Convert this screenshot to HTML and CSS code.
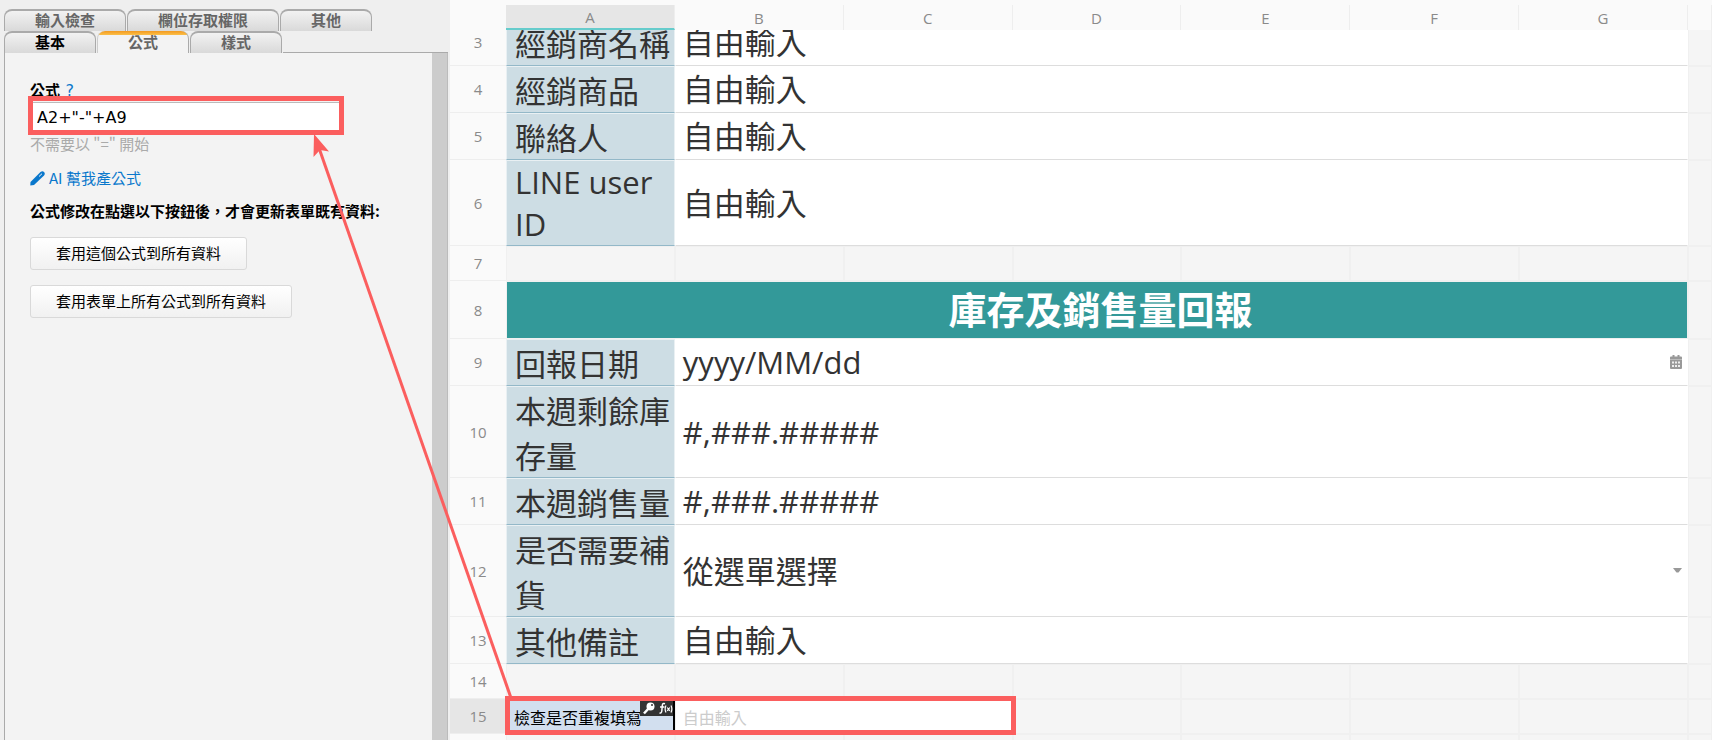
FILE: index.html
```html
<!DOCTYPE html>
<html lang="zh-Hant">
<head>
    <meta charset="UTF-8">
    <meta name="viewport" content="width=device-width, initial-scale=1.0">
    <title>公式設定</title>
    <link rel="stylesheet" href="styles.css">
</head>
<body>
    <div class="app">
        <aside class="settings">
            <nav class="tabs">
                <div class="tab-row">
                    <button type="button" class="tab">輸入檢查</button>
                    <button type="button" class="tab">欄位存取權限</button>
                    <button type="button" class="tab">其他</button>
                </div>
                <div class="tab-row">
                    <button type="button" class="tab tab-dark">基本</button>
                    <button type="button" class="tab tab-active">公式</button>
                    <button type="button" class="tab">樣式</button>
                    <span class="tab-rest"></span>
                </div>
            </nav>
            <div class="panel">
                <div class="panel-body">
                    <div class="field-title">
                        <label for="formula">公式</label>
                        <a href="#" class="help">?</a>
                    </div>
                    <input type="text" id="formula" class="formula-input" value='A2+"-"+A9'>
                    <p class="hint">不需要以 "=" 開始</p>
                    <a href="#" class="ai-link">
                        <svg width="15" height="15" viewBox="0 0 15 15">
                            <path d="M0.300 14.500 L0.500 11 L10.500 1 Q12.500 -0.500 14 1 Q15.500 2.500 14 4.500 L4 14 Z" fill="#0a78cc"/>
                            <path d="M9 5.500 L12 2.700" stroke="#f3f3f3" stroke-width="1"/>
                        </svg>
                        AI 幫我產公式
                    </a>
                    <p class="notice">公式修改在點選以下按鈕後，才會更新表單既有資料:</p>
                    <button type="button" class="apply">套用這個公式到所有資料</button>
                    <button type="button" class="apply">套用表單上所有公式到所有資料</button>
                </div>
                <div class="scrollbar"></div>
            </div>
        </aside>

        <main class="sheet">
            <table class="grid grid-head">
                <colgroup><col class="col-num"><col span="7"><col class="col-end"></colgroup>
                <tr>
                    <th></th>
                    <th class="selected">A</th>
                    <th>B</th>
                    <th>C</th>
                    <th>D</th>
                    <th>E</th>
                    <th>F</th>
                    <th>G</th>
                    <th></th>
                </tr>
            </table>
            <div class="sheet-body">
                <table class="grid">
                    <colgroup><col class="col-num"><col span="7"><col class="col-end"></colgroup>
                    <tr>
                        <th scope="row">3</th>
                        <td class="name">經銷商名稱</td>
                        <td class="value" colspan="6">自由輸入</td>
                        <td></td>
                    </tr>
                    <tr>
                        <th scope="row">4</th>
                        <td class="name">經銷商品</td>
                        <td class="value" colspan="6">自由輸入</td>
                        <td></td>
                    </tr>
                    <tr>
                        <th scope="row">5</th>
                        <td class="name">聯絡人</td>
                        <td class="value" colspan="6">自由輸入</td>
                        <td></td>
                    </tr>
                    <tr>
                        <th scope="row">6</th>
                        <td class="name">LINE user ID</td>
                        <td class="value" colspan="6">自由輸入</td>
                        <td></td>
                    </tr>
                    <tr class="empty">
                        <th scope="row">7</th>
                        <td></td><td></td><td></td><td></td><td></td><td></td><td></td><td></td>
                    </tr>
                    <tr>
                        <th scope="row">8</th>
                        <td class="banner" colspan="7">庫存及銷售量回報</td>
                        <td></td>
                    </tr>
                    <tr>
                        <th scope="row">9</th>
                        <td class="name">回報日期</td>
                        <td class="value" colspan="6">
                            <div class="with-icon">
                                yyyy/MM/dd
                                <svg width="12" height="14" viewBox="0 0 12 14">
                                    <path d="M2.500 0h2v1.500h3V0h2v1.500H11a1 1 0 0 1 1 1V13a1 1 0 0 1-1 1H1a1 1 0 0 1-1-1V2.500a1 1 0 0 1 1-1h1.500z" fill="#999"/>
                                    <path d="M0 4.500h12" stroke="#bbb"/>
                                    <path d="M2 6.500h2v2H2zM5 6.500h2v2H5zM8 6.500h2v2H8zM2 10h2v2H2zM5 10h2v2H5zM8 10h2v2H8z" fill="#eee"/>
                                </svg>
                            </div>
                        </td>
                        <td></td>
                    </tr>
                    <tr>
                        <th scope="row">10</th>
                        <td class="name">本週剩餘庫存量</td>
                        <td class="value" colspan="6">#,###.#####</td>
                        <td></td>
                    </tr>
                    <tr>
                        <th scope="row">11</th>
                        <td class="name">本週銷售量</td>
                        <td class="value" colspan="6">#,###.#####</td>
                        <td></td>
                    </tr>
                    <tr>
                        <th scope="row">12</th>
                        <td class="name">是否需要補貨</td>
                        <td class="value" colspan="6">
                            <div class="with-icon">
                                從選單選擇
                                <svg width="9" height="5" viewBox="0 0 9 5"><path d="M0 0h9L5.500 4.500h-2z" fill="#999"/></svg>
                            </div>
                        </td>
                        <td></td>
                    </tr>
                    <tr>
                        <th scope="row">13</th>
                        <td class="name">其他備註</td>
                        <td class="value" colspan="6">自由輸入</td>
                        <td></td>
                    </tr>
                    <tr class="empty">
                        <th scope="row">14</th>
                        <td></td><td></td><td></td><td></td><td></td><td></td><td></td><td></td>
                    </tr>
                    <tr class="empty">
                        <th scope="row" class="selected">15</th>
                        <td class="key-name">
                            檢查是否重複填寫
                            <span class="badge">
                                <svg width="33" height="15" viewBox="0 0 33 15">
                                    <path d="M4 12.500 L8.500 7.500" stroke="#fff" stroke-width="2.500"/>
                                    <circle cx="10.500" cy="5.500" r="4" fill="#fff"/>
                                    <circle cx="12" cy="4" r="1" fill="#333"/>
                                    <path d="M25 2.700 Q22.500 1.700 22.300 4.500 L21.800 10 Q21.500 12.500 19.500 12 M20 6h4.500" stroke="#fff" stroke-width="1.500" fill="none"/>
                                    <path d="M26 4.500 Q24.300 8 26 11.500 M31 4.500 Q32.700 8 31 11.500 M27.200 6.500 L29.800 9.800 M29.800 6.500 L27.200 9.800" stroke="#fff" stroke-width="1.200" fill="none"/>
                                </svg>
                            </span>
                        </td>
                        <td class="key-value" colspan="2">自由輸入</td>
                        <td></td><td></td><td></td><td></td><td></td>
                    </tr>
                    <tr class="empty">
                        <th scope="row"></th>
                        <td></td><td></td><td></td><td></td><td></td><td></td><td></td><td></td>
                    </tr>
                </table>
            </div>
        </main>

        <!-- red boxes and the arrow between them -->
        <svg class="callout" width="1020" height="740" viewBox="0 0 1020 740">
            <g fill="none" stroke="#fb5e5e">
                <rect x="30.500" y="98.500" width="311" height="34" stroke-width="5"/>
                <rect x="507.500" y="698.500" width="506" height="34" stroke-width="5"/>
                <path d="M511 698 L319 148" stroke-width="3"/>
            </g>
            <path d="M314 134 L329 151.500 L320 150 L313.500 157 Z" fill="#fb5e5e"/>
        </svg>
    </div>
</body>
</html>
```

FILE: styles.css
```css
body, html {
    margin: 0;
    padding: 0;
    height: 100%;
    overflow: hidden;
    font-family: "Open Sans", "Noto Sans CJK TC", sans-serif;
}

p {
    margin: 0;
}

a {
    color: #0a78cc;
    text-decoration: none;
}

.app {
    position: relative;
    display: flex;
    height: 100%;
}

/* left settings panel */
.settings {
    display: flex;
    flex-direction: column;
    flex: none;
    width: 450px;
    box-sizing: border-box;
    padding: 9px 2px 0 4px;
    background-color: #efefef;
    font-family: "Noto Sans CJK TC", sans-serif;
    font-size: 15px;
    line-height: 22px;
}

.tab-row {
    display: flex;
    gap: 1px;
}

.tab {
    height: 22px;
    padding: 0 30px 3px;
    border: 1px solid #aaa;
    border-top-width: 2px;
    border-bottom: none;
    border-radius: 8px 8px 0 0;
    background: linear-gradient(#f2f2f2, #d9d9d9);
    color: #666;
    font: bold 15px/16px "Noto Sans CJK TC", sans-serif;
}

.tab-dark {
    color: #000;
}

.tab-active {
    padding-bottom: 1px;
    border-top: none;
    border-left-color: #ccc;
    background: linear-gradient(#f39a1f, #fbc04a 4px, #f3f3f3 4px);
}

.tab-rest {
    flex: 1;
    border-bottom: 1px solid #aaa;
}

.panel {
    display: flex;
    flex: 1;
    border-left: 1px solid #aaa;
    border-right: 1px solid #bbb;
    background-color: #f3f3f3;
}

.panel-body {
    flex: 1;
    display: flex;
    flex-direction: column;
    align-items: flex-start;
    padding: 26px 0 0 25px;
}

.scrollbar {
    width: 15px;
    background-color: #ccc;
}

.field-title label {
    font-weight: bold;
}

.field-title .help {
    margin-left: 2px;
    font-family: "DejaVu Sans", sans-serif;
    font-size: 16px;
}

.formula-input {
    width: 312px;
    height: 31px;
    box-sizing: border-box;
    padding: 0 6px;
    border: 1px solid #bbb;
    background-color: #fff;
    color: #000;
    font: 16px "DejaVu Sans", sans-serif;
}

.hint {
    color: #aaa;
}

.ai-link {
    display: flex;
    align-items: center;
    gap: 4px;
    margin-top: 12px;
}

.notice {
    margin-top: 11px;
    font-weight: bold;
}

.apply {
    height: 33px;
    margin-top: 15px;
    padding: 0 25px 2px;
    border: 1px solid #d9d9d9;
    border-radius: 3px;
    background: linear-gradient(#fff, #f1f1f1);
    color: #000;
    font: 15px "Noto Sans CJK TC", sans-serif;
}

/* spreadsheet */
.sheet {
    flex: 1;
    min-width: 0;
    display: flex;
    flex-direction: column;
    background-color: #fafafa;
}

.sheet-body {
    flex: 1;
    overflow: hidden;
}

.sheet-body .grid {
    margin-top: -11px; /* scrolled a little, row 3 is cut by the header */
}

.grid {
    width: 100%;
    table-layout: fixed;
    border-spacing: 0;
    color: #333;
    font-size: 31px;
}

.grid-head {
    padding-top: 5px;
}

.col-num {
    width: 56px;
}

.col-end {
    width: 24px;
}

.grid th {
    padding: 0;
    border-bottom: 1px solid #eee;
    background-color: #fafafa;
    color: #8a8a8a;
    font-size: 15px;
    font-weight: normal;
}

.grid-head th {
    height: 24px;
    border-right: 1px solid #eee;
    border-bottom: none;
    line-height: 20px;
}

.grid-head th:first-child {
    border-right-color: #fafafa;
}

.grid-head .selected {
    height: 23px;
    border-bottom: 2px solid #66cccc;
}

.grid .selected {
    background-color: #e6e6e6;
}

.grid td {
    padding: 0;
    border: 1px solid #f0f0f0;
    background-color: #f5f5f5;
}

.grid td.name {
    padding-left: 8px;
    border-color: #e9f0f3;
    border-bottom-color: #93b8c8;
    background-color: #cddde4;
}

.grid td.value {
    padding: 0 0 1px 7px;
    border: 1px solid #fff;
    border-bottom-color: #ddd;
    background-color: #fff;
    line-height: 44px;
}

.grid td.banner {
    height: 55px;
    padding: 0 0 1px 7px;
    border-color: #f0f0f0;
    background-color: #339999;
    color: #fff;
    font-size: 38px;
    font-weight: bold;
    line-height: 55px;
    text-align: center;
}

.grid .empty th,
.grid .empty td {
    height: 33px;
}

.with-icon {
    display: flex;
    align-items: center;
    justify-content: space-between;
    padding-right: 5px;
}

.grid td.key-name {
    position: relative;
    padding-left: 7px;
    border-right: 2px solid #000;
    background-color: #d2dfef;
    color: #000;
    font-size: 16px;
}

.badge {
    position: absolute;
    top: 1px;
    right: 0;
    height: 15px;
    background-color: #333;
    line-height: 0;
}

.grid td.key-value {
    padding-left: 7px;
    background-color: #fff;
    color: #ccc;
    font-size: 16px;
}

/* drawn over the page */
.callout {
    position: absolute;
    top: 0;
    left: 0;
    pointer-events: none;
}
```
